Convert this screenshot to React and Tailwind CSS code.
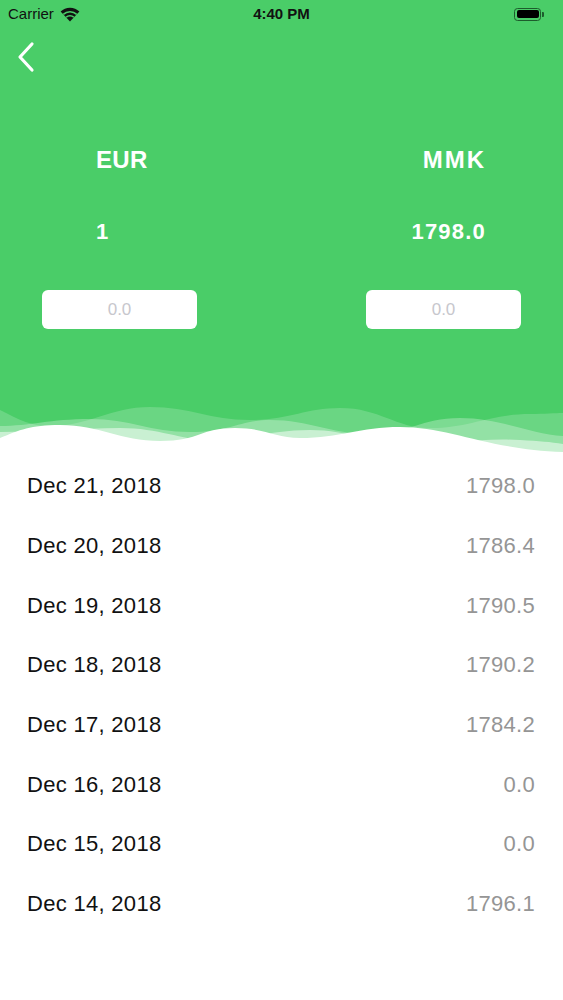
import React from "react";

const rows = [
  ["Dec 21, 2018", "1798.0"],
  ["Dec 20, 2018", "1786.4"],
  ["Dec 19, 2018", "1790.5"],
  ["Dec 18, 2018", "1790.2"],
  ["Dec 17, 2018", "1784.2"],
  ["Dec 16, 2018", "0.0"],
  ["Dec 15, 2018", "0.0"],
  ["Dec 14, 2018", "1796.1"],
];

function Wifi() {
  return (
    <svg width="20" height="15" viewBox="0 0 20 15" className="ml-[6px]">
      <path d="M10 14.5 L0.6 4.6 A13.5 13.5 0 0 1 19.4 4.6 Z" fill="#111" />
      <path d="M3.3 7.4 A9.6 9.6 0 0 1 16.7 7.4" stroke="#4acd68" strokeWidth="1.6" fill="none" />
      <path d="M6.1 10.3 A5.6 5.6 0 0 1 13.9 10.3" stroke="#4acd68" strokeWidth="1.6" fill="none" />
    </svg>
  );
}

function Battery() {
  return (
    <div className="flex items-center">
      <div className="w-[27px] h-[13px] rounded-[3.5px] border border-[#1d5c2c] p-[1.5px]">
        <div className="w-full h-full rounded-[2px] bg-black" />
      </div>
      <div className="w-[2px] h-[5px] rounded-r-[1px] bg-[#1d5c2c] ml-[1px]" />
    </div>
  );
}

export default function App() {
  const font = { fontFamily: '"Liberation Sans", Arial, sans-serif' };
  return (
    <div className="w-[563px] h-[1000px] bg-white overflow-hidden" style={font}>
      <div className="bg-[#4acd68]">
        {/* status bar */}
        <div className="relative h-[28px] flex items-center px-[8px]">
          <span className="text-[15px] text-[#111]">Carrier</span>
          <Wifi />
          <span className="absolute left-0 right-0 text-center text-[15px] font-bold text-[#111] pointer-events-none">
            4:40 PM
          </span>
          <div className="ml-auto mr-[11px]">
            <Battery />
          </div>
        </div>
        {/* back */}
        <div className="h-[58px] flex items-center pl-[15px]">
          <svg width="22" height="32" viewBox="0 0 22 32">
            <path d="M17 3 L5 16 L17 29" stroke="white" strokeWidth="3.2" fill="none" strokeLinecap="round" strokeLinejoin="round" />
          </svg>
        </div>
        {/* currencies */}
        <div className="flex justify-between pt-[60px] text-white font-bold">
          <div className="pl-[96px] text-[24px] leading-[28px] tracking-[0.3px]">EUR</div>
          <div className="pr-[77px] text-[24px] leading-[28px] tracking-[2px]">MMK</div>
        </div>
        <div className="flex justify-between pt-[45px] text-white font-bold">
          <div className="pl-[96px] text-[22px] leading-[26px]">1</div>
          <div className="pr-[77px] text-[22px] leading-[26px] tracking-[1.2px]">1798.0</div>
        </div>
        <div className="flex justify-between pt-[45px] px-[42px]">
          <div className="w-[155px] h-[39px] rounded-[6px] bg-white flex items-center justify-center text-[17px] text-[#c7c7cd]">
            0.0
          </div>
          <div className="w-[155px] h-[39px] rounded-[6px] bg-white flex items-center justify-center text-[17px] text-[#c7c7cd]">
            0.0
          </div>
        </div>
        <div className="h-[71px]" />
      </div>
      {/* wave */}
      <svg width="563" height="70" viewBox="0 0 563 70" className="block bg-[#4acd68]">
        <path
          d="M0,10 C20,20 30,26 50,26 C90,26 110,7 150,7 C190,7 210,20 250,20 C290,20 305,8 340,8 C380,8 395,28 430,28 C470,28 490,14 530,14 C545,14 555,13 563,13 L563,70 L0,70 Z"
          fill="white"
          fillOpacity="0.18"
        />
        <path
          d="M0,26 C30,26 50,19 90,19 C130,19 150,32 190,32 C230,32 240,20 270,20 C310,20 330,34 370,34 C410,34 420,18 460,18 C500,18 530,34 563,36 L563,70 L0,70 Z"
          fill="white"
          fillOpacity="0.28"
        />
        <path
          d="M0,32 C40,32 80,28 120,28 C160,28 180,40 210,40 C250,40 270,30 310,30 C350,30 370,44 410,44 C450,44 480,38 520,40 C540,41 550,42 563,44 L563,70 L0,70 Z"
          fill="white"
          fillOpacity="0.5"
        />
        <path
          d="M0,38 C20,30 30,25 60,25 C100,25 120,41 160,41 C200,41 200,28 235,28 C265,28 275,38 300,38 C340,38 360,27 400,27 C450,27 490,50 563,52 L563,70 L0,70 Z"
          fill="white"
        />
      </svg>
      {/* list */}
      <div className="-mt-[14px]">
        {rows.map(([d, v]) => (
          <div key={d} className="h-[59.7px] flex items-center justify-between pl-[27px] pr-[28px]">
            <span className="text-[22px] text-[#111] tracking-[0.3px]">{d}</span>
            <span className="text-[22px] text-[#959595] tracking-[0.3px]">{v}</span>
          </div>
        ))}
      </div>
    </div>
  );
}
